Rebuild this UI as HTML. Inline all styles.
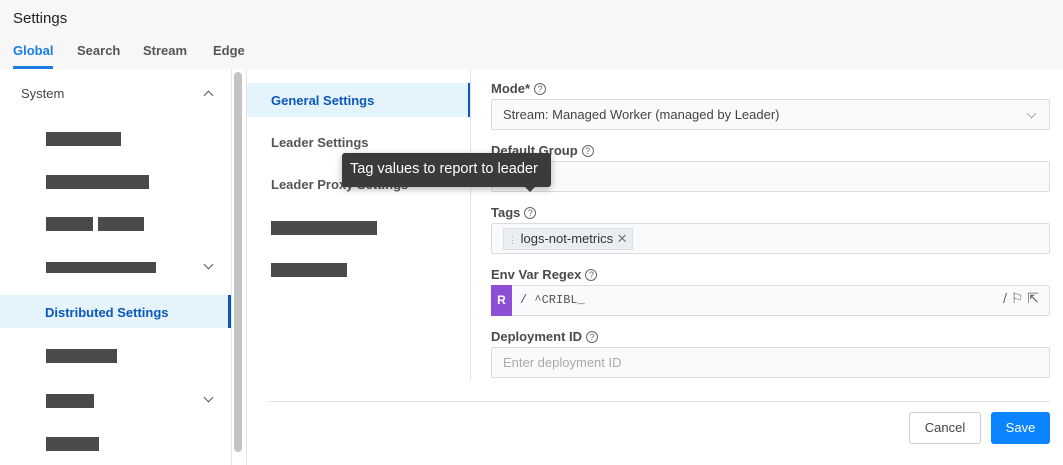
<!DOCTYPE html><html><head><style>
*{box-sizing:border-box;margin:0;padding:0}
body{width:1063px;height:465px;overflow:hidden;font-family:"Liberation Sans",sans-serif;background:#fff;position:relative;color:#333}
.a{position:absolute}
.hdr{left:0;top:0;width:1063px;height:69px;background:#f7f7f7}
.bar{background:#4a4a4a;height:14px}
.lbl{font-size:13px;font-weight:bold;color:#4a4a4a}
.q{display:inline-block;width:12px;height:12px;border:1px solid #666;border-radius:50%;font-size:9px;text-align:center;line-height:10px;color:#666;font-weight:normal;margin-left:4px;vertical-align:1px}
.inp{left:491px;width:559px;height:31px;border:1px solid #d9dde2;background:#f9fafb;border-radius:2px;font-size:13px;color:#444;padding:7px 11px}
.nav{font-size:13px;font-weight:bold;color:#555;left:271px}
.chev{width:7px;height:7px;border-left:1.5px solid #555;border-top:1.5px solid #555}
</style></head><body>
<div class="a hdr"></div>
<div class="a" style="left:13px;top:10px;font-size:15px;color:#222">Settings</div>
<div class="a" style="left:13px;top:43px;font-size:13px;font-weight:bold;color:#1a7fe0">Global</div>
<div class="a" style="left:13px;top:66px;width:40px;height:3px;background:#1a7fe0"></div>
<div class="a" style="left:77px;top:43px;font-size:13px;font-weight:bold;color:#555">Search</div>
<div class="a" style="left:143px;top:43px;font-size:13px;font-weight:bold;color:#555">Stream</div>
<div class="a" style="left:213px;top:43px;font-size:13px;font-weight:bold;color:#555">Edge</div>
<div class="a" style="left:21px;top:86px;font-size:13px;color:#444">System</div>
<div class="a chev" style="left:205px;top:92px;transform:rotate(45deg)"></div>
<div class="a bar" style="left:46px;top:132px;width:75px"></div>
<div class="a bar" style="left:46px;top:175px;width:103px"></div>
<div class="a bar" style="left:46px;top:217px;width:47px"></div>
<div class="a bar" style="left:98px;top:217px;width:46px"></div>
<div class="a bar" style="left:46px;top:262px;width:110px;height:11px"></div>
<div class="a chev" style="left:205px;top:261px;transform:rotate(225deg)"></div>
<div class="a" style="left:0;top:295px;width:232px;height:33px;background:#e5f3fd"></div>
<div class="a" style="left:228px;top:295px;width:3px;height:33px;background:#0a58b8"></div>
<div class="a" style="left:45px;top:305px;font-size:13px;font-weight:bold;color:#0a58b8">Distributed Settings</div>
<div class="a bar" style="left:46px;top:349px;width:71px"></div>
<div class="a bar" style="left:46px;top:394px;width:48px"></div>
<div class="a chev" style="left:205px;top:394px;transform:rotate(225deg)"></div>
<div class="a bar" style="left:46px;top:437px;width:53px"></div>
<div class="a" style="left:231px;top:69px;width:1px;height:396px;background:#e5e5e5"></div>
<div class="a" style="left:234px;top:72px;width:8px;height:380px;background:#c4c4c4;border-radius:4px"></div>
<div class="a" style="left:246px;top:69px;width:1px;height:396px;background:#e5e5e5"></div>
<div class="a" style="left:247px;top:83px;width:221px;height:34px;background:#e5f3fd"></div>
<div class="a" style="left:468px;top:83px;width:3px;height:34px;background:#0a58b8"></div>
<div class="a" style="left:470px;top:69px;width:1px;height:312px;background:#e5e5e5"></div>
<div class="a nav" style="top:93px;color:#0a58b8">General Settings</div>
<div class="a nav" style="top:135px">Leader Settings</div>
<div class="a nav" style="top:177px">Leader Proxy Settings</div>
<div class="a bar" style="left:271px;top:221px;width:106px"></div>
<div class="a bar" style="left:271px;top:263px;width:76px"></div>
<div class="a lbl" style="left:491px;top:81px">Mode*<span class="q">?</span></div>
<div class="a inp" style="top:99px">Stream: Managed Worker (managed by Leader)<span class="chev" style="position:absolute;right:14px;top:10px;transform:rotate(225deg);border-color:#aaa"></span></div>
<div class="a lbl" style="left:491px;top:143px">Default Group<span class="q">?</span></div>
<div class="a inp" style="top:161px">default</div>
<div class="a lbl" style="left:491px;top:205px">Tags<span class="q">?</span></div>
<div class="a inp" style="top:223px;padding:4px 11px"><span style="display:inline-block;background:#ebeef1;border:1px solid #dde1e5;padding:2px 4px;font-size:13px;color:#333"><span style="color:#aaa;font-size:9px">&#8942;</span> logs-not-metrics <span style="color:#777">&#10005;</span></span></div>
<div class="a lbl" style="left:491px;top:267px">Env Var Regex<span class="q">?</span></div>
<div class="a inp" style="top:285px;padding:7px 0 0 28px;font-family:'Liberation Mono',monospace;font-size:12px;color:#555">/ ^CRIBL_<span style="position:absolute;right:10px;top:4px;font-family:'Liberation Sans';color:#666;font-size:14px">/ &#9872; &#8689;</span></div>
<div class="a" style="left:491px;top:285px;width:21px;height:31px;background:#8e4fd6;color:#fff;font-size:12px;font-weight:bold;text-align:center;line-height:31px">R</div>
<div class="a lbl" style="left:491px;top:329px">Deployment ID<span class="q">?</span></div>
<div class="a inp" style="top:347px;color:#aaa">Enter deployment ID</div>
<div class="a" style="left:267px;top:401px;width:783px;height:1px;background:#e5e5e5"></div>
<div class="a" style="left:909px;top:412px;width:72px;height:32px;border:1px solid #ccc;border-radius:3px;font-size:13px;color:#444;text-align:center;line-height:30px">Cancel</div>
<div class="a" style="left:991px;top:412px;width:59px;height:32px;background:#0a84ff;border-radius:3px;font-size:13px;color:#fff;text-align:center;line-height:32px">Save</div>
<div class="a" style="left:342px;top:153px;width:209px;height:34px;background:#3b3b3b;border-radius:3px;color:#fff;font-size:14.5px;padding:8px 8px;white-space:nowrap;box-shadow:0 2px 8px rgba(0,0,0,.3)">Tag values to report to leader</div>
<div class="a" style="left:525px;top:187px;width:0;height:0;border:5px solid transparent;border-top-color:#3b3b3b"></div>
</body></html>
